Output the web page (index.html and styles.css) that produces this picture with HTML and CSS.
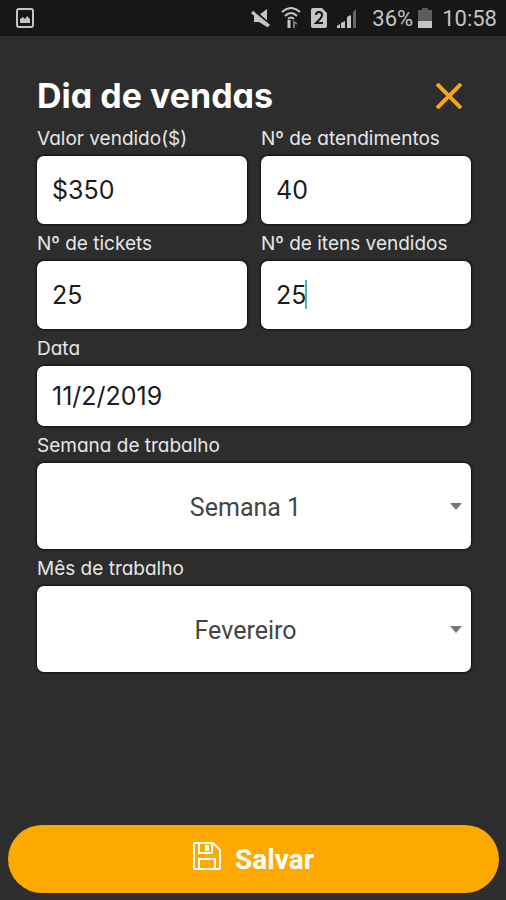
FILE: index.html
```
<!DOCTYPE html>
<html lang="pt-BR">
<head>
    <meta charset="UTF-8">
    <meta name="viewport" content="width=device-width, initial-scale=1.0">
    <title>Dia de vendas</title>
    <link rel="stylesheet" href="styles.css">
</head>
<body>
    <div class="status-bar">
        <svg class="status-photo" width="18" height="20" viewBox="0 0 18 20">
            <rect x="1" y="1" width="16" height="18" rx="2" fill="none" stroke="#c4c4c4" stroke-width="2"/>
            <path d="M4 15v-4l3-2 2 2 2-3 3 3v4z" fill="#c4c4c4"/>
        </svg>
        <div class="status-icons">
            <svg width="20" height="20" viewBox="0 0 20 20">
                <path d="M3 7h5l8-6v18l-8-5H3z" fill="#c4c4c4"/>
                <path d="M1 1l18 16" stroke="#171717" stroke-width="3"/>
                <path d="M1 4l17 14" stroke="#c4c4c4" stroke-width="3"/>
            </svg>
            <svg width="20" height="22" viewBox="0 0 20 22">
                <g fill="none" stroke="#c4c4c4" stroke-width="2">
                    <path d="M1 5q9-8 18 0"/>
                    <path d="M4 9q6-6 12 0"/>
                    <path d="M7 12q3-3 6 0"/>
                </g>
                <path d="M8 13v8" stroke="#c4c4c4" stroke-width="3"/>
                <path d="M13 21v-6l3 2" stroke="#777" stroke-width="2" fill="none"/>
            </svg>
            <svg width="16" height="20" viewBox="0 0 16 20">
                <path d="M2 0h9l5 5v13q0 2-2 2H2q-2 0-2-2V2q0-2 2-2z" fill="#c4c4c4"/>
                <path d="M5 7q0-3 3-3t3 3q0 2-2 4l-4 4h7" fill="none" stroke="#171717" stroke-width="2"/>
            </svg>
            <svg width="20" height="20" viewBox="0 0 20 20">
                <path d="M0 20v-2l3-2v4zM4 20v-5l4-2v7zM10 20V9l4-2v13z" fill="#c4c4c4"/>
                <path d="M16 20V4l3-3v19z" fill="#666"/>
            </svg>
        </div>
        <span class="battery-text">36%</span>
        <svg width="14" height="20" viewBox="0 0 14 20">
            <path d="M4 0h6v2h4v11H0V2h4z" fill="#5c5c5c"/>
            <path d="M0 13h14v7H0z" fill="#c4c4c4"/>
        </svg>
        <span class="clock">10:58</span>
    </div>

    <form class="sales-form">
        <div class="form-header">
            <h1>Dia de vendas</h1>
            <button type="button" class="close-btn" aria-label="Fechar">
                <svg width="26" height="26" viewBox="0 0 26 26">
                    <path d="M1 1l24 24M25 1L1 25" stroke="#f9a51a" stroke-width="4"/>
                </svg>
            </button>
        </div>

        <div class="form-grid">
            <div class="field">
                <label for="valor">Valor vendido($)</label>
                <input type="text" id="valor" value="$350">
            </div>
            <div class="field">
                <label for="atendimentos">Nº de atendimentos</label>
                <input type="text" id="atendimentos" value="40">
            </div>
            <div class="field">
                <label for="tickets">Nº de tickets</label>
                <input type="text" id="tickets" value="25">
            </div>
            <div class="field">
                <label for="itens">Nº de itens vendidos</label>
                <input type="text" id="itens" value="25">
                <span class="caret"></span>
            </div>
        </div>

        <div class="field">
            <label for="data">Data</label>
            <input type="text" id="data" class="date-input" value="11/2/2019">
        </div>
        <div class="field">
            <label for="semana">Semana de trabalho</label>
            <div class="select-box">
                <select id="semana">
                    <option>Semana 1</option>
                    <option>Semana 2</option>
                    <option>Semana 3</option>
                    <option>Semana 4</option>
                </select>
            </div>
        </div>
        <div class="field">
            <label for="mes">Mês de trabalho</label>
            <div class="select-box">
                <select id="mes">
                    <option>Janeiro</option>
                    <option selected>Fevereiro</option>
                    <option>Março</option>
                </select>
            </div>
        </div>

        <button type="submit" class="save-btn">
            <svg width="28" height="28" viewBox="0 0 28 28" fill="none" stroke="#fff" stroke-width="2">
                <path d="M2 1h18l7 7v18q0 1-1 1H2q-1 0-1-1V2q0-1 1-1z"/>
                <path d="M6 1v10h13V1M6 27V17h16v10"/>
                <path d="M14 3v6" stroke-width="4"/>
            </svg>
            <span>Salvar</span>
        </button>
    </form>
</body>
</html>
```
FILE: styles.css
```
* { box-sizing: border-box; }
body { margin: 0; min-height: 100vh; display: flex; flex-direction: column; background: #2d2d2d; color: #fff; font-family: Inter, sans-serif; font-feature-settings: "cv11"; }

.status-bar { display: flex; align-items: center; height: 36px; padding: 0 9px 0 16px; background: #171717; color: #c4c4c4; font-family: Roboto, sans-serif; font-size: 22px; }
.status-bar svg { display: block; flex: none; }
.status-icons { display: flex; align-items: center; gap: 10px; margin-left: auto; }
.battery-text { margin: 0 5px 0 15px; }
.clock { margin-left: 10px; }

.sales-form { flex: 1; display: flex; flex-direction: column; padding: 36px 7px 7px 8px; }
.form-header { display: flex; justify-content: space-between; align-items: center; height: 47px; margin: 0 28px 0 29px; }
.form-header h1 { margin: 0; font-size: 34px; line-height: 44px; font-weight: 700; }
.close-btn { display: flex; padding: 0; margin-right: 9px; background: none; border: none; cursor: pointer; }

.form-grid { display: grid; grid-template-columns: 1fr 1fr; column-gap: 14px; margin: 0 28px 0 29px; }
.field { position: relative; min-width: 0; }
.sales-form > .field { margin: 0 28px 0 29px; }
.field label { display: block; padding-top: 2px; font-size: 19px; line-height: 35px; color: #e6e6e6; white-space: nowrap; }
.field input { display: block; width: 100%; height: 68px; padding: 0 15px; background: #fff; border: none; border-radius: 7px; box-shadow: 0 0 2px 1px #111; color: #1c1c1c; font: inherit; font-size: 25px; }
.field .date-input { height: 60px; }
.caret { position: absolute; left: 44px; bottom: 20px; width: 2px; height: 29px; background: #4db6ac; }

.select-box { position: relative; }
.select-box select { display: block; width: 100%; height: 86px; padding: 2px 32px 0 15px; appearance: none; background: #fff; border: none; border-radius: 7px; box-shadow: 0 0 2px 1px #111; color: #444; font-family: Roboto, sans-serif; font-size: 25px; text-align: center; text-align-last: center; }
.select-box::after { content: ""; position: absolute; right: 9px; top: 40px; border: 6px solid transparent; border-top: 7px solid #777; border-bottom: none; pointer-events: none; }

.save-btn { display: flex; justify-content: center; align-items: center; gap: 14px; height: 68px; margin-top: auto; background: #fda900; border: none; border-radius: 34px; color: #fff; font-family: Roboto, sans-serif; font-size: 28px; font-weight: 700; cursor: pointer; }
.save-btn svg { margin-bottom: 6px; }
```
